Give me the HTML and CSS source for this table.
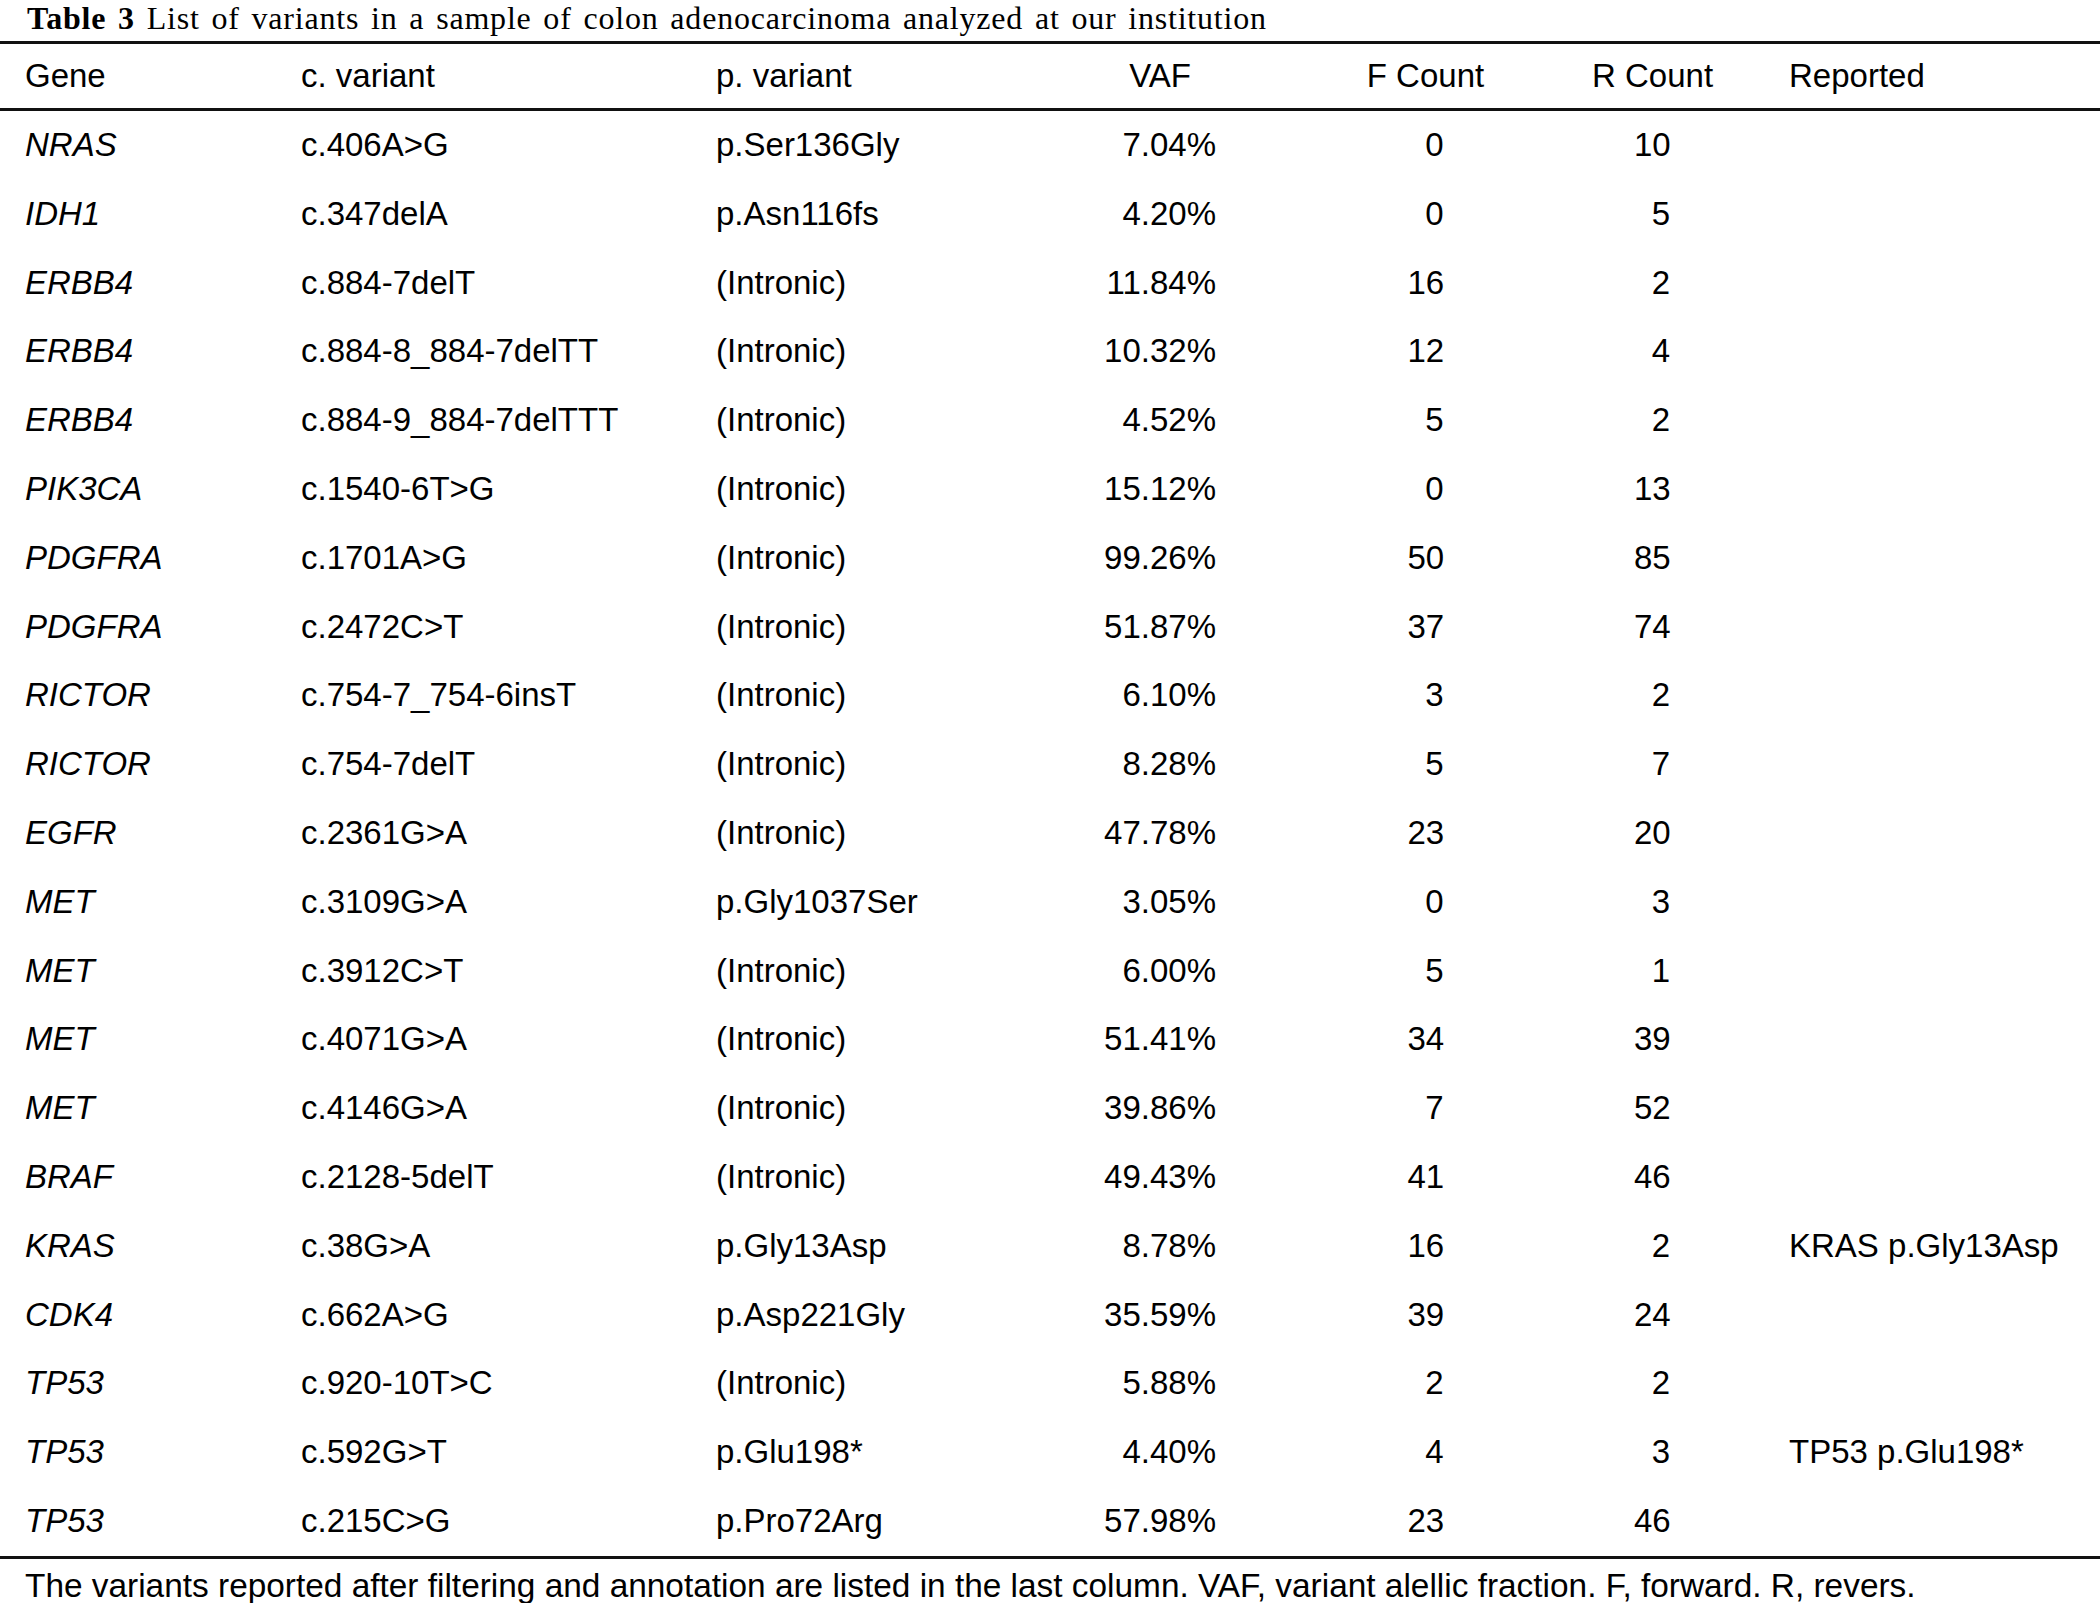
FILE: index.html
```html
<!DOCTYPE html>
<html>
<head>
<meta charset="utf-8">
<link rel="stylesheet" href="styles.css">
</head>
<body>
<div class="page">
  <div class="title"><b>Table 3</b> List of variants in a sample of colon adenocarcinoma analyzed at our institution</div>
  <div class="table">
    <div class="row head">
      <div class="c1">Gene</div>
      <div class="c2">c. variant</div>
      <div class="c3">p. variant</div>
      <div class="num">VAF</div>
      <div class="num">F Count</div>
      <div class="num">R Count</div>
      <div class="c7">Reported</div>
    </div>
    <div class="body">
      <div class="row"><div class="c1 gene">NRAS</div><div class="c2">c.406A&gt;G</div><div class="c3">p.Ser136Gly</div><div class="num"><span class="vaf">7.04%</span></div><div class="num"><span class="cnt">0</span></div><div class="num"><span class="cnt">10</span></div><div class="c7"></div></div>
      <div class="row"><div class="c1 gene">IDH1</div><div class="c2">c.347delA</div><div class="c3">p.Asn116fs</div><div class="num"><span class="vaf">4.20%</span></div><div class="num"><span class="cnt">0</span></div><div class="num"><span class="cnt">5</span></div><div class="c7"></div></div>
      <div class="row"><div class="c1 gene">ERBB4</div><div class="c2">c.884-7delT</div><div class="c3">(Intronic)</div><div class="num"><span class="vaf">11.84%</span></div><div class="num"><span class="cnt">16</span></div><div class="num"><span class="cnt">2</span></div><div class="c7"></div></div>
      <div class="row"><div class="c1 gene">ERBB4</div><div class="c2">c.884-8_884-7delTT</div><div class="c3">(Intronic)</div><div class="num"><span class="vaf">10.32%</span></div><div class="num"><span class="cnt">12</span></div><div class="num"><span class="cnt">4</span></div><div class="c7"></div></div>
      <div class="row"><div class="c1 gene">ERBB4</div><div class="c2">c.884-9_884-7delTTT</div><div class="c3">(Intronic)</div><div class="num"><span class="vaf">4.52%</span></div><div class="num"><span class="cnt">5</span></div><div class="num"><span class="cnt">2</span></div><div class="c7"></div></div>
      <div class="row"><div class="c1 gene">PIK3CA</div><div class="c2">c.1540-6T&gt;G</div><div class="c3">(Intronic)</div><div class="num"><span class="vaf">15.12%</span></div><div class="num"><span class="cnt">0</span></div><div class="num"><span class="cnt">13</span></div><div class="c7"></div></div>
      <div class="row"><div class="c1 gene">PDGFRA</div><div class="c2">c.1701A&gt;G</div><div class="c3">(Intronic)</div><div class="num"><span class="vaf">99.26%</span></div><div class="num"><span class="cnt">50</span></div><div class="num"><span class="cnt">85</span></div><div class="c7"></div></div>
      <div class="row"><div class="c1 gene">PDGFRA</div><div class="c2">c.2472C&gt;T</div><div class="c3">(Intronic)</div><div class="num"><span class="vaf">51.87%</span></div><div class="num"><span class="cnt">37</span></div><div class="num"><span class="cnt">74</span></div><div class="c7"></div></div>
      <div class="row"><div class="c1 gene">RICTOR</div><div class="c2">c.754-7_754-6insT</div><div class="c3">(Intronic)</div><div class="num"><span class="vaf">6.10%</span></div><div class="num"><span class="cnt">3</span></div><div class="num"><span class="cnt">2</span></div><div class="c7"></div></div>
      <div class="row"><div class="c1 gene">RICTOR</div><div class="c2">c.754-7delT</div><div class="c3">(Intronic)</div><div class="num"><span class="vaf">8.28%</span></div><div class="num"><span class="cnt">5</span></div><div class="num"><span class="cnt">7</span></div><div class="c7"></div></div>
      <div class="row"><div class="c1 gene">EGFR</div><div class="c2">c.2361G&gt;A</div><div class="c3">(Intronic)</div><div class="num"><span class="vaf">47.78%</span></div><div class="num"><span class="cnt">23</span></div><div class="num"><span class="cnt">20</span></div><div class="c7"></div></div>
      <div class="row"><div class="c1 gene">MET</div><div class="c2">c.3109G&gt;A</div><div class="c3">p.Gly1037Ser</div><div class="num"><span class="vaf">3.05%</span></div><div class="num"><span class="cnt">0</span></div><div class="num"><span class="cnt">3</span></div><div class="c7"></div></div>
      <div class="row"><div class="c1 gene">MET</div><div class="c2">c.3912C&gt;T</div><div class="c3">(Intronic)</div><div class="num"><span class="vaf">6.00%</span></div><div class="num"><span class="cnt">5</span></div><div class="num"><span class="cnt">1</span></div><div class="c7"></div></div>
      <div class="row"><div class="c1 gene">MET</div><div class="c2">c.4071G&gt;A</div><div class="c3">(Intronic)</div><div class="num"><span class="vaf">51.41%</span></div><div class="num"><span class="cnt">34</span></div><div class="num"><span class="cnt">39</span></div><div class="c7"></div></div>
      <div class="row"><div class="c1 gene">MET</div><div class="c2">c.4146G&gt;A</div><div class="c3">(Intronic)</div><div class="num"><span class="vaf">39.86%</span></div><div class="num"><span class="cnt">7</span></div><div class="num"><span class="cnt">52</span></div><div class="c7"></div></div>
      <div class="row"><div class="c1 gene">BRAF</div><div class="c2">c.2128-5delT</div><div class="c3">(Intronic)</div><div class="num"><span class="vaf">49.43%</span></div><div class="num"><span class="cnt">41</span></div><div class="num"><span class="cnt">46</span></div><div class="c7"></div></div>
      <div class="row"><div class="c1 gene">KRAS</div><div class="c2">c.38G&gt;A</div><div class="c3">p.Gly13Asp</div><div class="num"><span class="vaf">8.78%</span></div><div class="num"><span class="cnt">16</span></div><div class="num"><span class="cnt">2</span></div><div class="c7">KRAS p.Gly13Asp</div></div>
      <div class="row"><div class="c1 gene">CDK4</div><div class="c2">c.662A&gt;G</div><div class="c3">p.Asp221Gly</div><div class="num"><span class="vaf">35.59%</span></div><div class="num"><span class="cnt">39</span></div><div class="num"><span class="cnt">24</span></div><div class="c7"></div></div>
      <div class="row"><div class="c1 gene">TP53</div><div class="c2">c.920-10T&gt;C</div><div class="c3">(Intronic)</div><div class="num"><span class="vaf">5.88%</span></div><div class="num"><span class="cnt">2</span></div><div class="num"><span class="cnt">2</span></div><div class="c7"></div></div>
      <div class="row"><div class="c1 gene">TP53</div><div class="c2">c.592G&gt;T</div><div class="c3">p.Glu198*</div><div class="num"><span class="vaf">4.40%</span></div><div class="num"><span class="cnt">4</span></div><div class="num"><span class="cnt">3</span></div><div class="c7">TP53 p.Glu198*</div></div>
      <div class="row"><div class="c1 gene">TP53</div><div class="c2">c.215C&gt;G</div><div class="c3">p.Pro72Arg</div><div class="num"><span class="vaf">57.98%</span></div><div class="num"><span class="cnt">23</span></div><div class="num"><span class="cnt">46</span></div><div class="c7"></div></div>
    </div>
  </div>
  <div class="note">The variants reported after filtering and annotation are listed in the last column. VAF, variant alellic fraction. F, forward. R, revers.</div>
</div>
</body>
</html>
```
FILE: styles.css
```css
html, body {
  margin: 0;
  padding: 0;
  background: #fff;
}
.page {
  width: 2100px;
  color: #000;
}
.title {
  font-family: "Liberation Serif", "Times New Roman", serif;
  font-size: 32px;
  line-height: 36px;
  height: 36px;
  padding-left: 27px;
  margin-bottom: 5px;
  letter-spacing: 0.8px;
  word-spacing: 3px;
  white-space: nowrap;
}
.title b {
  font-weight: bold;
}
.table {
  border-top: 3px solid #111;
  border-bottom: 3px solid #111;
  font-family: "Liberation Sans", Arial, sans-serif;
  font-size: 33px;
}
.row {
  display: grid;
  grid-template-columns: 276px 415px 345px 198px 333px 120px 388px;
  padding-left: 25px;
  height: 68.8px;
  line-height: 68.8px;
  white-space: nowrap;
}
.row.head {
  height: 64px;
  line-height: 64px;
  border-bottom: 3px solid #111;
}
.gene {
  font-style: italic;
}
.num {
  text-align: center;
}
.vaf, .cnt {
  display: inline-block;
  text-align: right;
}
.vaf {
  width: 112px;
}
.cnt {
  width: 36px;
}
.c7 {
  padding-left: 77px;
}
.note {
  font-family: "Liberation Sans", Arial, sans-serif;
  font-size: 33.4px;
  line-height: 46px;
  padding-top: 4px;
  padding-left: 25px;
  white-space: nowrap;
}
```
